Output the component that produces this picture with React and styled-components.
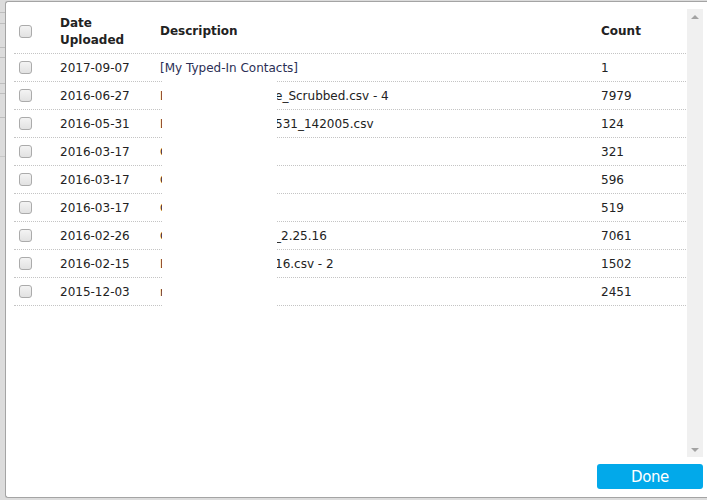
import React from "react";
import styled, { createGlobalStyle } from "styled-components";

const GlobalStyle = createGlobalStyle`
  html, body { margin: 0; padding: 0; }
  body {
    background: #dcdcdc;
    font-family: "DejaVu Sans", Verdana, sans-serif;
  }
  * { box-sizing: border-box; }
`;

const Page = styled.div`
  width: 707px;
  height: 500px;
  overflow: hidden;
  padding: 1px 0 0 5px;
  background-color: #dcdcdc;
  background-image:
    linear-gradient(to bottom, transparent 12px, #bdbdbd 12px, #bdbdbd 13px, transparent 13px),
    linear-gradient(to bottom, transparent 23px, #bdbdbd 23px, #bdbdbd 24px, transparent 24px),
    linear-gradient(to bottom, transparent 47px, #bdbdbd 47px, #bdbdbd 48px, transparent 48px),
    linear-gradient(to bottom, transparent 57px, #bdbdbd 57px, #bdbdbd 58px, transparent 58px),
    linear-gradient(to bottom, transparent 83px, #bdbdbd 83px, #bdbdbd 84px, transparent 84px),
    linear-gradient(to bottom, transparent 93px, #bdbdbd 93px, #bdbdbd 94px, transparent 94px),
    linear-gradient(to bottom, transparent 117px, #bdbdbd 117px, #bdbdbd 118px, transparent 118px),
    linear-gradient(to bottom, transparent 156px, #c8c8c8 156px, #c8c8c8 157px, transparent 157px);
`;

const Modal = styled.div`
  width: 702px;
  height: 497px;
  background: #ffffff;
  border: 1px solid #a4a4a4;
  border-right: none;
  border-radius: 3px 0 0 3px;
  display: flex;
  flex-direction: column;
`;

const Body = styled.div`
  display: flex;
  padding: 7px 4px 0 8px;
  height: 455px;
`;

const TableWrap = styled.div`
  position: relative;
  width: 673px;
  height: 448px;
`;

const Row = styled.div`
  display: grid;
  grid-template-columns: 38px 100px 441px 1fr;
  align-items: center;
  height: ${(p) => (p.$header ? "45px" : "28px")};
  border-bottom: 1px dotted #c4c4c4;
  margin-right: 1px;
  color: #222;
  font-size: 12px;
  font-weight: ${(p) => (p.$header ? 700 : 400)};
  line-height: 17px;
`;

const CheckCell = styled.div`
  padding-left: 5px;
  display: flex;
  align-items: center;
  padding-top: ${(p) => (p.$header ? "1px" : "0")};
`;

const Box = styled.span`
  display: block;
  width: 13px;
  height: 13px;
  border: 1px solid #ababab;
  border-radius: 3px;
  background: linear-gradient(#f3f3f3, #e2e2e2);
`;

const Cell = styled.div`
  padding-left: 8px;
  white-space: nowrap;
  padding-top: ${(p) => (p.$header ? "1px" : "1px")};
  color: ${(p) => (p.$typed ? "#2b2f55" : "inherit")};
`;

const DescCell = styled.div`
  padding-left: 8px;
  padding-top: 1px;
  display: grid;
  grid-template-columns: 115px auto;
  white-space: nowrap;
`;

const Lead = styled.span`
  overflow: hidden;
  color: #3a2a20;
`;

const Redaction = styled.div`
  position: absolute;
  left: 148px;
  top: 72px;
  width: 115px;
  height: 225px;
  background: #ffffff;
`;

const Scrollbar = styled.div`
  width: 16px;
  height: 448px;
  background: #f0f0f0;
  display: flex;
  flex-direction: column;
  justify-content: space-between;
  align-items: center;
  padding: 6px 0 5px;
`;

const Arrow = styled.span`
  width: 0;
  height: 0;
  border-left: 4px solid transparent;
  border-right: 4px solid transparent;
  ${(p) =>
    p.$down
      ? "border-top: 4px solid #a3a3a3;"
      : "border-bottom: 4px solid #a3a3a3;"}
`;

const Footer = styled.div`
  display: flex;
  justify-content: flex-end;
  padding: 7px 4px 0 0;
`;

const DoneButton = styled.button`
  width: 106px;
  height: 25px;
  border: none;
  border-radius: 3px;
  background: #02a9ea;
  color: #ffffff;
  font-family: "DejaVu Sans", Verdana, sans-serif;
  font-size: 15px;
  letter-spacing: -0.4px;
  padding: 0;
  cursor: pointer;
`;

const rows = [
  { date: "2017-09-07", lead: "[My Typed-In Contacts]", tail: "", count: "1", typed: true },
  { date: "2016-06-27", lead: "L", tail: "e_Scrubbed.csv - 4", count: "7979" },
  { date: "2016-05-31", lead: "L", tail: "531_142005.csv", count: "124" },
  { date: "2016-03-17", lead: "C", tail: "", count: "321" },
  { date: "2016-03-17", lead: "C", tail: "", count: "596" },
  { date: "2016-03-17", lead: "C", tail: "", count: "519" },
  { date: "2016-02-26", lead: "C", tail: "_2.25.16", count: "7061" },
  { date: "2016-02-15", lead: "L", tail: "16.csv - 2", count: "1502" },
  { date: "2015-12-03", lead: "n", tail: "", count: "2451" },
];

export default function App() {
  return (
    <>
      <GlobalStyle />
      <Page>
        <Modal>
          <Body>
            <TableWrap>
              <Row $header>
                <CheckCell $header>
                  <Box />
                </CheckCell>
                <Cell $header>
                  Date
                  <br />
                  Uploaded
                </Cell>
                <Cell $header>Description</Cell>
                <Cell $header>Count</Cell>
              </Row>
              {rows.map((r, i) => (
                <Row key={i}>
                  <CheckCell>
                    <Box />
                  </CheckCell>
                  <Cell>{r.date}</Cell>
                  {r.typed ? (
                    <Cell $typed>{r.lead}</Cell>
                  ) : (
                    <DescCell>
                      <Lead>{r.lead}</Lead>
                      <span>{r.tail}</span>
                    </DescCell>
                  )}
                  <Cell>{r.count}</Cell>
                </Row>
              ))}
              <Redaction />
            </TableWrap>
            <Scrollbar>
              <Arrow />
              <Arrow $down />
            </Scrollbar>
          </Body>
          <Footer>
            <DoneButton>Done</DoneButton>
          </Footer>
        </Modal>
      </Page>
    </>
  );
}
